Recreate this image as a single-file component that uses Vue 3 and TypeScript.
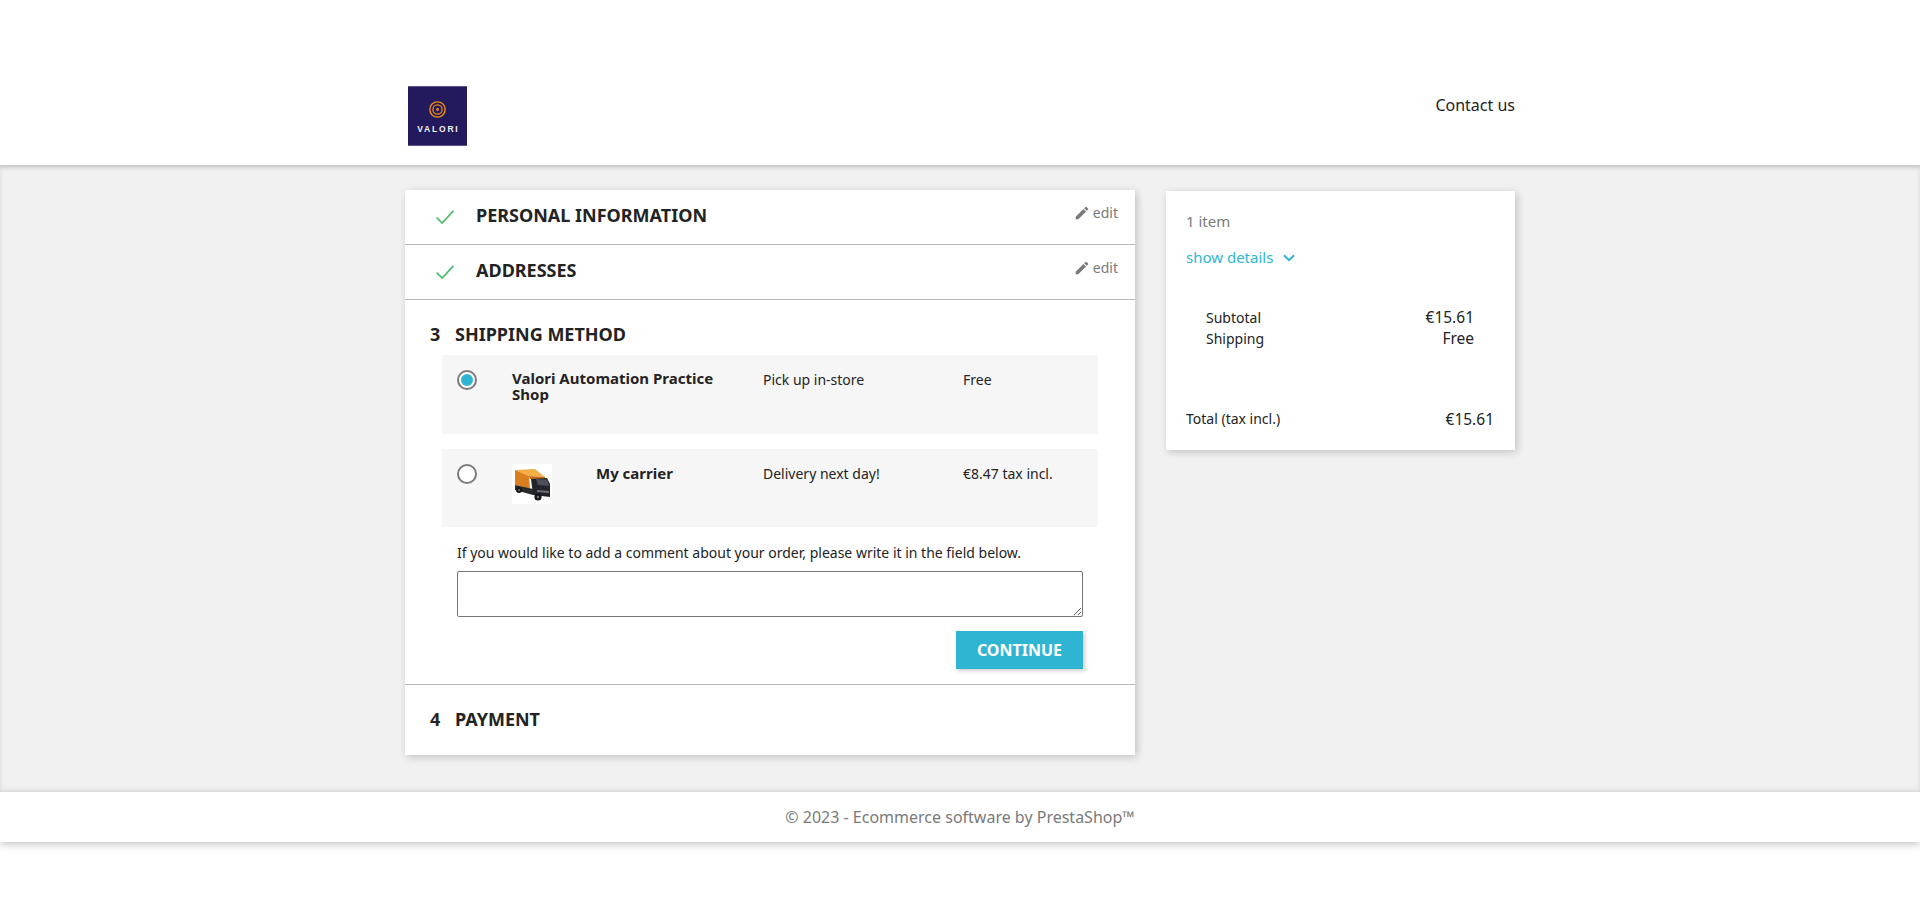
<script setup lang="ts">
interface Carrier {
  id: number
  name: string
  delay: string
  price: string
  selected: boolean
  logo: boolean
}
const carriers: Carrier[] = [
  { id: 1, name: 'Valori Automation Practice Shop', delay: 'Pick up in-store', price: 'Free', selected: true, logo: false },
  { id: 2, name: 'My carrier', delay: 'Delivery next day!', price: '€8.47 tax incl.', selected: false, logo: true }
]
const done = ['PERSONAL INFORMATION', 'ADDRESSES']
</script>

<template>
  <div class="page">
    <header class="header">
      <div class="container header-inner">
        <div class="logo">
          <svg class="rings" viewBox="0 0 20 20" width="17" height="17">
            <circle cx="10" cy="10" r="9" fill="none" stroke="#ee8c0a" stroke-width="1.7" />
            <circle cx="10" cy="10" r="5.4" fill="none" stroke="#ee8c0a" stroke-width="1.5" />
            <circle cx="10" cy="10" r="1.7" fill="#ee8c0a" />
          </svg>
          <span class="logo-text">VALORI</span>
        </div>
        <a class="contact">Contact us</a>
      </div>
    </header>

    <main class="wrapper">
      <div class="container columns">
        <section class="steps">
          <div v-for="title in done" :key="title" class="step done">
            <svg class="check" viewBox="0 0 18 14" width="18" height="14">
              <path d="M0.6 7.6 L6.2 13 L17.4 0.8" fill="none" stroke="#4cbb6c" stroke-width="1.7" />
            </svg>
            <h2 class="step-title">{{ title }}</h2>
            <span class="edit">
              <svg viewBox="2 2 20 20" width="14" height="14">
                <path fill="#7a7a7a" d="M3 17.25V21h3.75L17.81 9.94l-3.75-3.75L3 17.25zM20.71 7.04a1 1 0 0 0 0-1.41l-2.34-2.34a1 1 0 0 0-1.41 0l-1.83 1.83 3.75 3.75 1.83-1.83z" />
              </svg>
              edit
            </span>
          </div>

          <div class="step current">
            <h2 class="step-title numbered"><span class="num">3</span>SHIPPING METHOD</h2>
            <div class="carriers">
              <div v-for="c in carriers" :key="c.id" class="carrier">
                <span class="radio" :class="{ on: c.selected }"></span>
                <div class="carrier-name" :class="{ 'has-logo': c.logo }">
                  <svg v-if="c.logo" class="truck" viewBox="0 0 40 40" width="40" height="40">
                    <rect width="40" height="40" fill="#fff" />
                    <polygon points="3,6 23,5 33,13 17,12" fill="#f3ad45" />
                    <polygon points="3,6 17,12 18,25 3,21" fill="#d97f1f" />
                    <polygon points="17,12 33,13 33,15 18,15" fill="#c26d18" />
                    <polygon points="19,15 35,14 38,20 38,33 21,31" fill="#22242a" />
                    <polygon points="24,15 35,15.5 37.5,22 26,21" fill="#4c5058" />
                    <polygon points="25,26 37,27 37,29 25,28" fill="#6d7076" />
                    <polygon points="3,21 21,25 21,31 3,26" fill="#2a2a2c" />
                    <circle cx="7" cy="26" r="3" fill="#17171a" />
                    <circle cx="26" cy="33" r="3.6" fill="#17171a" />
                    <circle cx="26" cy="33" r="1.2" fill="#77797e" />
                    <circle cx="7" cy="26" r="1" fill="#77797e" />
                  </svg>
                  <span>{{ c.name }}</span>
                </div>
                <span class="cell">{{ c.delay }}</span>
                <span class="cell">{{ c.price }}</span>
              </div>
            </div>
            <div class="comment">
              <p class="comment-label">If you would like to add a comment about your order, please write it in the field below.</p>
              <textarea class="comment-box"></textarea>
            </div>
            <div class="actions">
              <button class="continue" type="button">CONTINUE</button>
            </div>
          </div>

          <div class="step last">
            <h2 class="step-title numbered"><span class="num">4</span>PAYMENT</h2>
          </div>
        </section>

        <aside class="summary">
          <p class="items">1 item</p>
          <a class="details">
            show details
            <svg viewBox="0 0 12 8" width="12" height="8">
              <path d="M1 1.2 L6 6.2 L11 1.2" fill="none" stroke="#2fb5d2" stroke-width="2" />
            </svg>
          </a>
          <div class="lines">
            <div class="line"><span>Subtotal</span><span class="amount">€15.61</span></div>
            <div class="line"><span>Shipping</span><span class="amount">Free</span></div>
          </div>
          <div class="total"><span>Total (tax incl.)</span><span class="amount">€15.61</span></div>
        </aside>
      </div>
    </main>

    <footer class="footer">© 2023 - Ecommerce software by PrestaShop™</footer>
  </div>
</template>

<style>
html, body { margin: 0; background: #fff; }
</style>

<style scoped>
.page {
  font-family: "Noto Sans", "Open Sans", sans-serif;
  font-size: 14px;
  color: #232323;
  min-height: 100vh;
}
.container { width: 1110px; margin: 0 auto; }
.header {
  position: relative;
  z-index: 1;
  height: 165px;
  background: #fff;
  box-shadow: 0 2px 5px 0 rgba(0, 0, 0, .11);
}
.header-inner {
  display: flex;
  justify-content: space-between;
  padding-top: 86px;
}
.logo {
  width: 59px;
  height: 60px;
  margin-left: 3px;
  box-sizing: border-box;
  background: #231a5e;
  border-top: 1px solid #5d5591;
  border-bottom: 1px solid #5d5591;
  display: flex;
  flex-direction: column;
  align-items: center;
  padding-top: 14px;
}
.logo-text {
  margin-top: 6px;
  color: #f2f2f2;
  font-family: "Liberation Sans", sans-serif;
  font-size: 8.5px;
  line-height: 10px;
  font-weight: 700;
  letter-spacing: 1.8px;
  padding-left: 1.8px;
}
.contact { font-size: 16px; line-height: 20px; margin: 9px 0 0 0; }
.wrapper {
  height: 627px;
  box-sizing: border-box;
  padding-top: 25px;
  background: #f1f1f1;
  box-shadow: inset 0 2px 5px 0 rgba(0, 0, 0, .11);
}
.columns { display: flex; justify-content: space-between; align-items: flex-start; }
.steps {
  width: 730px;
  background: #fff;
  box-shadow: 2px 2px 8px 0 rgba(0, 0, 0, .2);
}
.step { border-bottom: 1px solid #b8b8b8; box-sizing: border-box; }
.step.last { border-bottom: 0; height: 70px; padding: 22px 0 0 25px; }
.step.done {
  position: relative;
  height: 55px;
  display: flex;
  align-items: center;
  padding: 0 0 0 31px;
}
.check { margin-top: -1px; }
.step-title {
  margin: 0;
  font-size: 18px;
  line-height: 24px;
  font-weight: 700;
  color: #232323;
}
.done .step-title { margin: -5px 0 0 22px; }
.num { display: inline-block; width: 25px; }
.edit {
  position: absolute;
  right: 17px;
  top: 13px;
  color: #7a7a7a;
  line-height: 20px;
  display: flex;
  align-items: center;
  gap: 4px;
}
.current { height: 385px; padding: 22px 30px 0 25px; }
.carriers {
  display: flex;
  flex-direction: column;
  gap: 15px;
  margin: 9px 0 0 12px;
  width: 656px;
}
.carrier {
  display: grid;
  grid-template-columns: 70px 251px 200px 1fr;
  box-sizing: border-box;
  min-height: 79px;
  padding-top: 15px;
  background: #f6f6f6;
  align-items: start;
}
.carrier + .carrier { min-height: 78px; }
.radio {
  justify-self: start;
  margin-left: 15px;
  width: 20px;
  height: 20px;
  box-sizing: border-box;
  border: 2px solid #7a7a7a;
  border-radius: 50%;
  background: #fff;
  position: relative;
}
.radio.on::after {
  content: "";
  position: absolute;
  inset: 2px;
  border-radius: 50%;
  background: #2fb5d2;
}
.carrier-name {
  font-size: 15px;
  font-weight: 700;
  line-height: 16px;
  padding-right: 30px;
}
.carrier-name.has-logo {
  display: flex;
  align-items: flex-start;
  gap: 44px;
  padding-right: 0;
}
.carrier-name.has-logo span { margin-top: 1px; }
.cell { line-height: 20px; margin-top: 0; }
.comment { margin: 16px 0 0 27px; }
.comment-label { margin: 0; line-height: 20px; }
.comment-box {
  display: block;
  box-sizing: border-box;
  width: 626px;
  height: 46px;
  margin: 8px 0 0;
  padding: 2px;
  border: 1px solid #767676;
  border-radius: 2px;
  background: #fff;
}
.actions { display: flex; justify-content: flex-end; margin: 14px 22px 0 0; }
.continue {
  width: 127px;
  height: 38px;
  border: 0;
  padding: 0;
  background: #2fb5d2;
  color: #fff;
  font-family: inherit;
  font-size: 16px;
  font-weight: 700;
  box-shadow: 2px 2px 4px 0 rgba(0, 0, 0, .2);
}
.summary {
  box-sizing: border-box;
  width: 349px;
  height: 259px;
  margin-top: 1px;
  padding: 20px 21px 0 20px;
  background: #fff;
  box-shadow: 2px 2px 8px 0 rgba(0, 0, 0, .2);
}
.items { margin: 0; color: #7a7a7a; font-size: 15px; line-height: 20px; }
.details {
  display: flex;
  align-items: center;
  gap: 10px;
  margin-top: 16px;
  color: #2fb5d2;
  font-size: 15px;
  line-height: 20px;
}
.details svg { margin-top: 2px; }
.lines { margin: 40px 20px 0; line-height: 21px; }
.line, .total { display: flex; justify-content: space-between; }
.amount { font-size: 15.5px; }
.total { margin-top: 59px; line-height: 22px; }
.footer {
  position: relative;
  height: 50px;
  background: #fff;
  color: #7a7a7a;
  font-size: 16px;
  line-height: 50px;
  text-align: center;
  box-shadow: 0 2px 8px 0 rgba(0, 0, 0, .25);
}
</style>
